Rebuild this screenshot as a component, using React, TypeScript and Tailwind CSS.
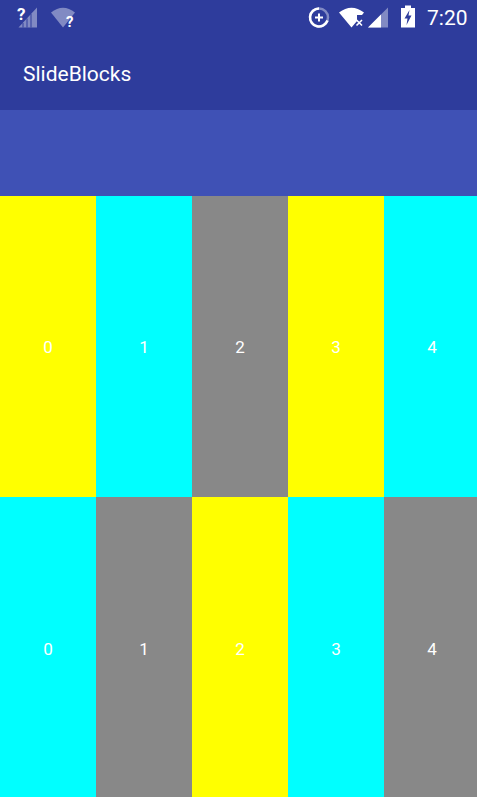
const rows = [
  ["bg-[#ffff00]", "bg-[#00ffff]", "bg-[#888888]", "bg-[#ffff00]", "bg-[#00ffff]"],
  ["bg-[#00ffff]", "bg-[#888888]", "bg-[#ffff00]", "bg-[#00ffff]", "bg-[#888888]"],
];

function LeftIcons() {
  return (
    <svg width="80" height="38" viewBox="0 0 80 38" className="block">
      <path d="M18.5 27.5 L37 7.5 V27.5 Z" fill="#ffffff" fillOpacity="0.4" />
      <path d="M23 27.5 V23 M27 27.5 V18.5 M31 27.5 V14" stroke="#2e3c9c" strokeWidth="1" />
      <path d="M51 12.5 Q63 3 75 12.5 L63 27.5 Z" fill="#ffffff" fillOpacity="0.4" />
      <text x="17" y="20" fill="#ffffff" fontSize="17" fontWeight="700" fontFamily="Roboto, sans-serif">?</text>
      <text x="66" y="27" fill="#ffffff" fontSize="15" fontWeight="700" fontFamily="Roboto, sans-serif">?</text>
    </svg>
  );
}

function RightIcons() {
  return (
    <svg width="120" height="38" viewBox="297 0 120 38" className="block">
      <circle cx="319" cy="17.5" r="9" fill="none" stroke="#ffffff" strokeOpacity="0.4" strokeWidth="2.5" />
      <path d="M319 8.5 A9 9 0 1 0 327.5 20.5" fill="none" stroke="#ffffff" strokeWidth="2.5" />
      <path d="M319 13.5 V21.5 M315 17.5 H323" stroke="#ffffff" strokeWidth="2" />
      <path d="M339 12.5 Q351.5 3 364 12.5 L362 15 H357 V21 L351.5 27.5 Z" fill="#ffffff" />
      <path d="M356.5 20 L362 25.5 M362 20 L356.5 25.5" stroke="#ffffff" strokeWidth="1.6" />
      <path d="M368 27.5 L388 7.5 V27.5 Z" fill="#ffffff" fillOpacity="0.4" />
      <path d="M368 27.5 L381 14.5 V27.5 Z" fill="#ffffff" />
      <path d="M401 8 H405 V5.5 H411 V8 H415 V27.5 H401 Z" fill="#ffffff" />
      <path d="M409.5 10 L404.5 18.5 H407.5 L406.5 25 L411.5 15.5 H408.5 Z" fill="#2e3c9c" />
    </svg>
  );
}

export default function App() {
  return (
    <div className="flex flex-col w-[477px] h-[797px] overflow-hidden font-['Roboto',sans-serif] text-white">
      <div className="bg-[#2e3c9c] h-[110px] flex flex-col shrink-0">
        <div className="h-[38px] flex items-start justify-between">
          <LeftIcons />
          <div className="flex items-start w-[180px]">
            <RightIcons />
            <span className="text-[21px] leading-[36px] font-normal ml-[10px]">7:20</span>
          </div>
        </div>
        <div className="h-[72px] flex items-center pl-[23px] pt-[2px] text-[21px]">SlideBlocks</div>
      </div>
      <div className="bg-[#3f51b5] h-[86px] shrink-0" />
      {rows.map((row, r) => (
        <div key={r} className={r === 0 ? "flex h-[301px] shrink-0" : "flex h-[304px] shrink-0"}>
          {row.map((c, i) => (
            <div
              key={i}
              className={`${c} w-[96px] shrink-0 flex items-center justify-center text-[17px] ${r === 0 ? "pt-[3px]" : "pt-[2px]"}`}
            >
              {i}
            </div>
          ))}
        </div>
      ))}
    </div>
  );
}
